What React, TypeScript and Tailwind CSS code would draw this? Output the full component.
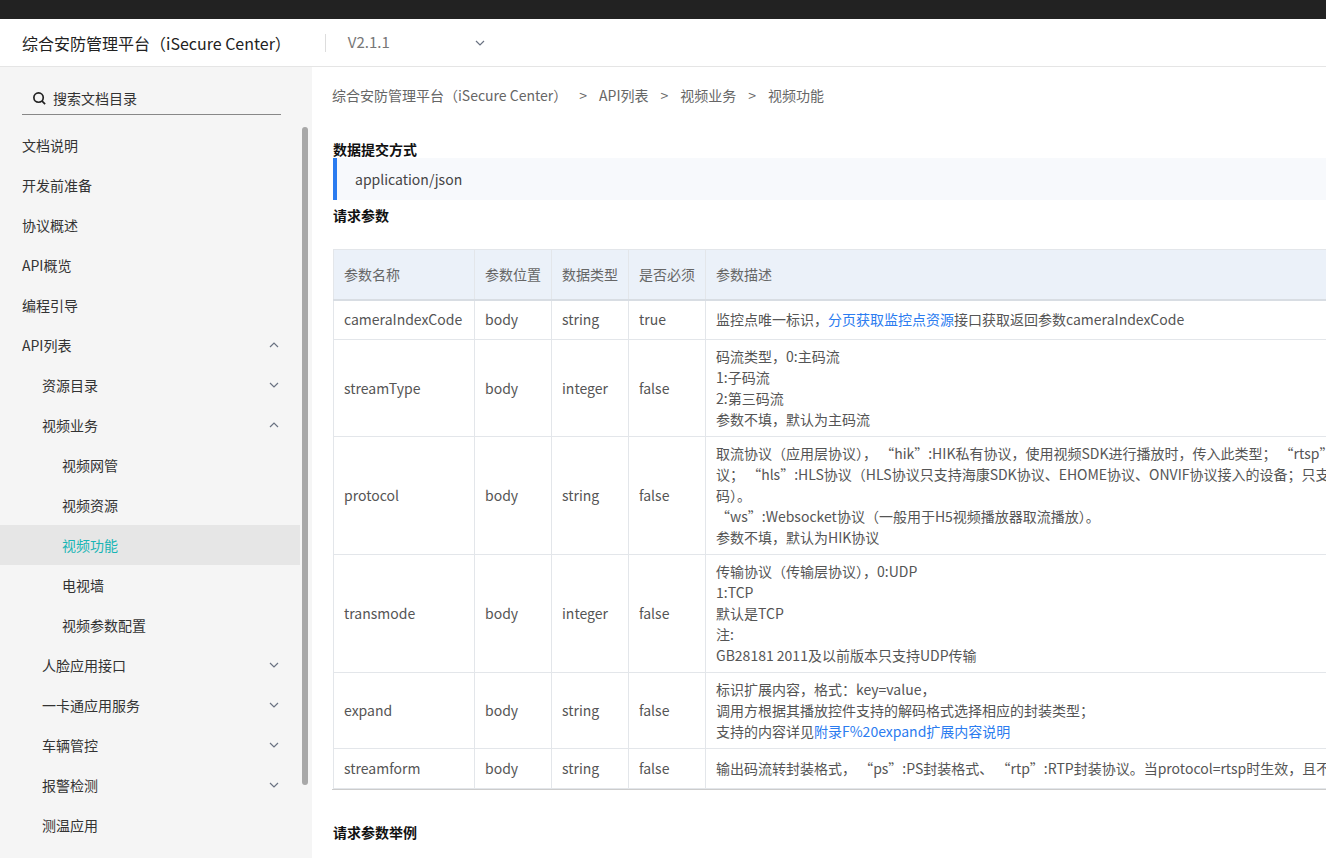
import React from 'react';

const font = { fontFamily: '"Noto Sans CJK SC", "Noto Sans", sans-serif' };

function Chevron({ up }: { up?: boolean }) {
  return (
    <svg width="12" height="12" viewBox="0 0 12 12" className="text-gray-500">
      <path d={up ? 'M2 8 L6 4 L10 8' : 'M2 4 L6 8 L10 4'} fill="none" stroke="currentColor" strokeWidth="1.2" />
    </svg>
  );
}

const nav: { label: string; level: number; arrow?: 'up' | 'down'; active?: boolean }[] = [
  { label: '文档说明', level: 0 },
  { label: '开发前准备', level: 0 },
  { label: '协议概述', level: 0 },
  { label: 'API概览', level: 0 },
  { label: '编程引导', level: 0 },
  { label: 'API列表', level: 0, arrow: 'up' },
  { label: '资源目录', level: 1, arrow: 'down' },
  { label: '视频业务', level: 1, arrow: 'up' },
  { label: '视频网管', level: 2 },
  { label: '视频资源', level: 2 },
  { label: '视频功能', level: 2, active: true },
  { label: '电视墙', level: 2 },
  { label: '视频参数配置', level: 2 },
  { label: '人脸应用接口', level: 1, arrow: 'down' },
  { label: '一卡通应用服务', level: 1, arrow: 'down' },
  { label: '车辆管控', level: 1, arrow: 'down' },
  { label: '报警检测', level: 1, arrow: 'down' },
  { label: '测温应用', level: 1 },
];

const link = 'text-[#2b7cf0]';

const rows: { name: string; type: string; req: string; h: string; desc: React.ReactNode[] }[] = [
  { name: 'cameraIndexCode', type: 'string', req: 'true', h: 'h-[40px]', desc: [<>监控点唯一标识，<span className={link}>分页获取监控点资源</span>接口获取返回参数cameraIndexCode</>] },
  { name: 'streamType', type: 'integer', req: 'false', h: 'h-[97px]', desc: ['码流类型，0:主码流', '1:子码流', '2:第三码流', '参数不填，默认为主码流'] },
  { name: 'protocol', type: 'string', req: 'false', h: 'h-[118px]', desc: ['取流协议（应用层协议）， “hik”:HIK私有协议，使用视频SDK进行播放时，传入此类型； “rtsp”:RTSP协', '议； “hls”:HLS协议（HLS协议只支持海康SDK协议、EHOME协议、ONVIF协议接入的设备；只支持H264编', '码）。', '“ws”:Websocket协议（一般用于H5视频播放器取流播放）。', '参数不填，默认为HIK协议'] },
  { name: 'transmode', type: 'integer', req: 'false', h: 'h-[118px]', desc: ['传输协议（传输层协议），0:UDP', '1:TCP', '默认是TCP', '注:', 'GB28181 2011及以前版本只支持UDP传输'] },
  { name: 'expand', type: 'string', req: 'false', h: 'h-[76px]', desc: ['标识扩展内容，格式：key=value，', '调用方根据其播放控件支持的解码格式选择相应的封装类型；', <>支持的内容详见<span className={link}>附录F%20expand扩展内容说明</span></>] },
  { name: 'streamform', type: 'string', req: 'false', h: 'h-[40px]', desc: ['输出码流转封装格式， “ps”:PS封装格式、 “rtp”:RTP封装协议。当protocol=rtsp时生效，且不传值时默认为RTP封装协议。'] },
];

export default function App() {
  return (
    <div style={font} className="w-[1326px] h-[858px] overflow-hidden bg-white text-[#333] flex flex-col">
      <div className="h-[19px] bg-[#222] shrink-0" />
      <div className="h-[48px] shrink-0 border-b border-[#e5e5e5] flex items-center pl-[22px]">
        <span className="text-[16px] text-[#222]">综合安防管理平台（iSecure Center）</span>
        <div className="w-px h-[18px] bg-[#ddd] ml-[34px]" />
        <span className="ml-[22px] text-[15px] text-[#777]">V2.1.1</span>
        <span className="ml-[84px]"><Chevron /></span>
      </div>
      <div className="flex flex-1 min-h-0">
        <aside className="w-[312px] shrink-0 bg-[#f5f5f5] relative">
          <div className="ml-[22px] w-[259px] mt-[16px] h-[32px] border-b border-[#888] flex items-center pl-[10px] gap-[6px] text-[14px] text-[#333]">
            <svg width="15" height="15" viewBox="0 0 16 16"><circle cx="7" cy="7" r="5" fill="none" stroke="#222" strokeWidth="1.8" /><path d="M10.5 10.5 L14 14" stroke="#222" strokeWidth="1.8" /></svg>
            搜索文档目录
          </div>
          <div className="absolute left-[302px] top-[60px] w-[6px] h-[658px] bg-[#a8a8a8] rounded-sm" />
          <ul className="mt-[10px] w-[300px]">
            {nav.map((n) => (
              <li key={n.label} className={`h-[40px] flex items-center justify-between pr-[20px] text-[14px] ${n.level === 0 ? 'pl-[22px]' : n.level === 1 ? 'pl-[42px]' : 'pl-[62px]'} ${n.active ? 'bg-[#e6e6e6] text-[#19b5b5]' : 'text-[#333]'}`}>
                <span>{n.label}</span>
                {n.arrow && <Chevron up={n.arrow === 'up'} />}
              </li>
            ))}
          </ul>
        </aside>
        <main className="flex-1 min-w-0 overflow-hidden pl-[20px]">
          <div className="h-[57px] flex items-center text-[14px] text-[#666] gap-[12px]">
            <span>综合安防管理平台（iSecure Center）</span><span>&gt;</span><span>API列表</span><span>&gt;</span><span>视频业务</span><span>&gt;</span><span>视频功能</span>
          </div>
          <div className="h-[34px] overflow-hidden pt-[15px] text-[14px] font-bold leading-[20px] text-[#111] pl-[1px]">数据提交方式</div>
          <div className="h-[42px] bg-[#f7f9fc] border-l-[4px] border-[#2b7cf0] flex items-center pl-[18px] text-[14px] text-[#444] ml-[1px]">application/json</div>
          <div className="h-[30px] flex items-center text-[14px] font-bold text-[#111] pl-[1px]">请求参数</div>
          <div className="h-[19px]" />
          <table className="border-collapse text-[14px] text-[#555] ml-[1px] w-[1100px] table-fixed">
            <colgroup>
              <col className="w-[141px]" /><col className="w-[77px]" /><col className="w-[77px]" /><col className="w-[77px]" /><col />
            </colgroup>
            <thead>
              <tr className="h-[50px] bg-[#ebf1f9] text-[#666]">
                {['参数名称', '参数位置', '数据类型', '是否必须', '参数描述'].map((t) => (
                  <th key={t} className="font-normal text-left px-[10px] border border-[#e3e6ea] border-b-[2px] border-b-[#d8dde3]">{t}</th>
                ))}
              </tr>
            </thead>
            <tbody>
              {rows.map((r) => (
                <tr key={r.name} className={r.h}>
                  <td className="px-[10px] border border-[#e3e6ea]">{r.name}</td>
                  <td className="px-[10px] border border-[#e3e6ea]">body</td>
                  <td className="px-[10px] border border-[#e3e6ea]">{r.type}</td>
                  <td className="px-[10px] border border-[#e3e6ea]">{r.req}</td>
                  <td className="px-[10px] border border-[#e3e6ea] leading-[21px] whitespace-pre overflow-hidden">
                    {r.desc.map((d, i) => <div key={i}>{d}</div>)}
                  </td>
                </tr>
              ))}
            </tbody>
          </table>
          <div className="h-[1px] bg-[#ccc] w-[1100px]" />
          <div className="mt-[32px] text-[14px] font-bold text-[#111] pl-[1px]">请求参数举例</div>
        </main>
      </div>
    </div>
  );
}
